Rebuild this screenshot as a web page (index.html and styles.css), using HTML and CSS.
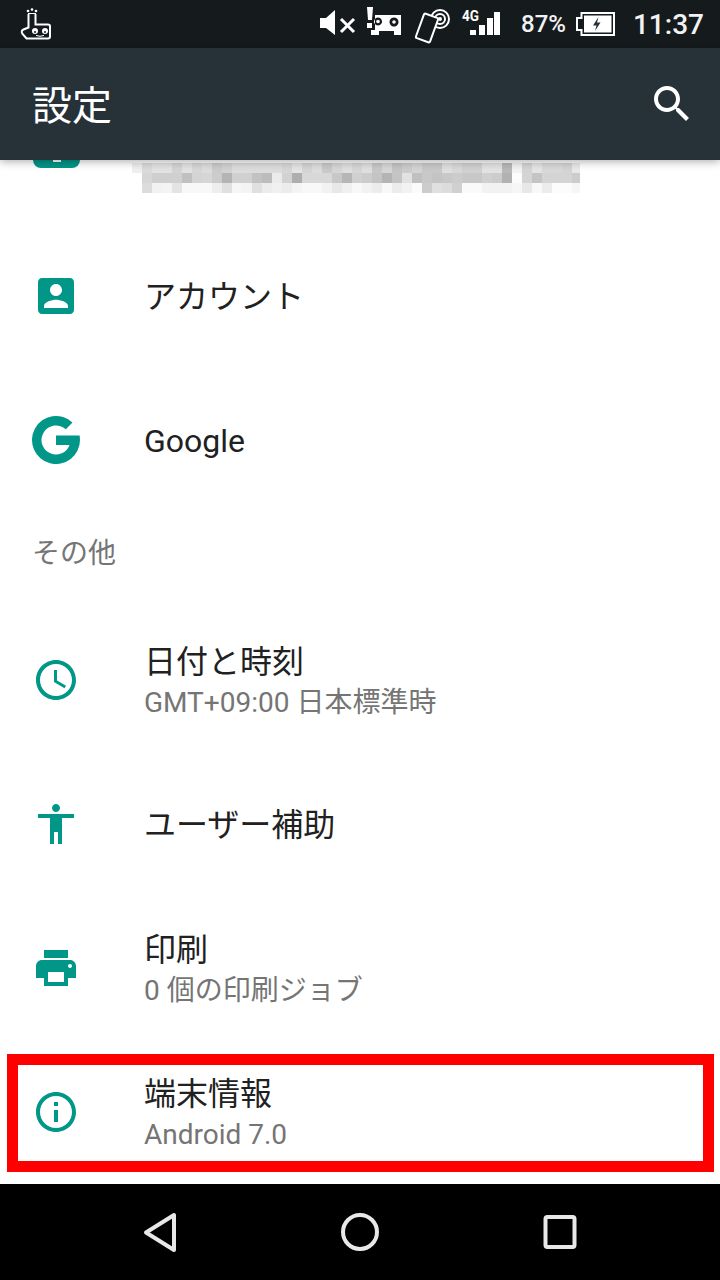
FILE: index.html
```html
<!DOCTYPE html>
<html lang="ja">
<head>
    <meta charset="UTF-8">
    <meta name="viewport" content="width=device-width, initial-scale=1.0">
    <title>設定</title>
    <link rel="stylesheet" href="styles.css">
</head>
<body>
    <div class="status-bar">
        <svg class="hand-icon" width="32" height="32" viewBox="20 8 32 32">
            <path class="line" d="M28.500 14V27.500L23.500 29.500Q20.500 31 22.500 34L26.500 38.500H48Q50 38.500 50 36.500V26Q50 24.500 48 24.500H35.500V14"/>
            <circle class="dot" cx="28" cy="11" r="1.300"/>
            <circle class="dot" cx="32" cy="9.500" r="1.300"/>
            <circle class="dot" cx="36" cy="11" r="1.300"/>
            <path class="thin" d="M28 13.500H36"/>
            <circle class="dot" cx="35" cy="31" r="3"/>
            <circle class="dot" cx="45" cy="31" r="3"/>
            <circle class="pupil" cx="35" cy="32" r="1"/>
            <circle class="pupil" cx="45" cy="32" r="1"/>
            <path class="thin" d="M36 35.500Q40 37 44 35.500"/>
        </svg>
        <div class="status-right">
            <svg class="status-icons" width="184" height="48" viewBox="318 0 184 48">
                <!-- mute -->
                <polygon class="dot" points="320,18 326,18 335,10 335,35 326,28 320,28"/>
                <path class="cross" d="M341 19L354 32M354 19L341 32"/>
                <!-- alert and glasses -->
                <polygon class="dot" points="367,7 373,7 372,20 368,20"/>
                <rect class="dot" x="367" y="23" width="5" height="5"/>
                <path class="dot" fill-rule="evenodd" d="M375 15H401V35H394V31H379V35H371V30H375ZM378 17.500a4 4 0 1 0 .01 0ZM394 17.500a4.500 4.500 0 1 0 .01 0Z"/>
                <circle class="dot" cx="378" cy="21.500" r="1.800"/>
                <circle class="dot" cx="394" cy="22" r="1.800"/>
                <!-- nfc -->
                <circle class="ring" cx="440" cy="19" r="9"/>
                <circle class="ring" cx="440" cy="19" r="5"/>
                <circle class="dot" cx="440" cy="19" r="2"/>
                <rect class="phone" x="419.500" y="15" width="15" height="26" rx="1.500" transform="rotate(20 427 28)"/>
                <!-- signal -->
                <text class="net" x="462" y="21" textLength="17" lengthAdjust="spacingAndGlyphs">4G</text>
                <rect class="dot" x="470" y="30" width="6" height="5"/>
                <rect class="dot" x="479" y="25" width="6" height="10"/>
                <rect class="dot" x="487" y="18" width="6" height="17"/>
                <rect class="dot" x="494" y="12" width="6" height="23"/>
            </svg>
            <span class="battery-text">87%</span>
            <svg class="battery" width="39" height="24" viewBox="0 0 39 24">
                <path class="line" d="M5.500 1H38V23H5.500V18H1V6H5.500Z"/>
                <rect class="dot" x="8" y="3.500" width="27.500" height="17"/>
                <polygon class="bolt" points="22.500,5 17,13.500 20.500,13.500 19,19 24.500,10.500 21,10.500"/>
            </svg>
            <span class="clock">11:37</span>
        </div>
    </div>

    <header class="app-bar">
        <h1>設定</h1>
        <svg class="icon" viewBox="0 0 24 24"><path class="white" d="M15.500 14h-.79l-.28-.27C15.410 12.590 16 11.110 16 9.500 16 5.910 13.090 3 9.500 3S3 5.910 3 9.500 5.910 16 9.500 16c1.610 0 3.090-.59 4.230-1.570l.27.28v.79l5 4.990L20.490 19l-4.990-5zm-6 0C7.010 14 5 11.990 5 9.500S7.010 5 9.500 5 14 7.010 14 9.500 11.990 14 9.500 14z"/></svg>
    </header>

    <main class="list">
        <div class="row-cut">
            <div class="cut-icon"><span></span></div>
            <svg class="mosaic" width="448" height="30" viewBox="0 0 44.800 3" shape-rendering="crispEdges">
                <g>
                    <rect x="0" fill="#efefef"/><rect x="1" fill="#dadada"/><rect x="2" fill="#e2e2e2"/><rect x="3" fill="#e2e2e2"/><rect x="4" fill="#d4d4d4"/><rect x="5" fill="#e2e2e2"/><rect x="6" fill="#d6d6d6"/><rect x="7" fill="#dcdcdc"/><rect x="8" fill="#cbcbcb"/><rect x="9" fill="#d2d2d2"/><rect x="10" fill="#dcdcdc"/><rect x="11" fill="#dcdcdc"/><rect x="12" fill="#dcdcdc"/><rect x="13" fill="#dcdcdc"/><rect x="14" fill="#dcdcdc"/><rect x="15" fill="#d6d6d6"/><rect x="16" fill="#e4e4e4"/><rect x="17" fill="#d4d4d4"/><rect x="18" fill="#dcdcdc"/><rect x="19" fill="#c9c9c9"/><rect x="20" fill="#d6d6d6"/><rect x="21" fill="#dfdfdf"/><rect x="22" fill="#d6d6d6"/>
                    <rect x="23" fill="#dfdfdf"/><rect x="24" fill="#c8c8c8"/><rect x="25" fill="#d6d6d6"/><rect x="26" fill="#c4c4c4"/><rect x="27" fill="#cccccc"/><rect x="28" fill="#d4d4d4"/><rect x="29" fill="#c8c8c8"/><rect x="30" fill="#c8c8c8"/><rect x="31" fill="#dfdfdf"/><rect x="32" fill="#d8d8d8"/><rect x="33" fill="#d0d0d0"/><rect x="34" fill="#d0d0d0"/><rect x="35" fill="#e2e2e2"/><rect x="36" fill="#e2e2e2"/><rect x="37" fill="#b8b8b8"/><rect x="38" fill="#f2f2f2"/><rect x="39" fill="#d4d4d4"/><rect x="40" fill="#e4e4e4"/><rect x="41" fill="#d8d8d8"/><rect x="42" fill="#d8d8d8"/><rect x="43" fill="#d4d4d4"/><rect x="44" fill="#e8e8e8"/>
                </g>
                <g transform="translate(0 1)">
                    <rect x="1" fill="#d6d6d6"/><rect x="2" fill="#cfcfcf"/><rect x="3" fill="#cfcfcf"/><rect x="4" fill="#d0d0d0"/><rect x="5" fill="#c0c0c0"/><rect x="6" fill="#d4d4d4"/><rect x="7" fill="#d6d6d6"/><rect x="8" fill="#cccccc"/><rect x="9" fill="#b4b4b4"/><rect x="10" fill="#d0d0d0"/><rect x="11" fill="#d0d0d0"/><rect x="12" fill="#c2c2c2"/><rect x="13" fill="#bcbcbc"/><rect x="14" fill="#ebebeb"/><rect x="15" fill="#d2d2d2"/><rect x="16" fill="#aeaeae"/><rect x="17" fill="#d8d8d8"/><rect x="18" fill="#d8d8d8"/><rect x="19" fill="#d8d8d8"/><rect x="20" fill="#c8c8c8"/><rect x="21" fill="#b6b6b6"/><rect x="22" fill="#d0d0d0"/>
                    <rect x="23" fill="#cccccc"/><rect x="24" fill="#c4c4c4"/><rect x="25" fill="#b4b4b4"/><rect x="26" fill="#c4c4c4"/><rect x="27" fill="#e2e2e2"/><rect x="28" fill="#c0c0c0"/><rect x="29" fill="#c8c8c8"/><rect x="30" fill="#c4c4c4"/><rect x="31" fill="#c8c8c8"/><rect x="32" fill="#cccccc"/><rect x="33" fill="#c8c8c8"/><rect x="34" fill="#c8c8c8"/><rect x="35" fill="#d0d0d0"/><rect x="36" fill="#cccccc"/><rect x="37" fill="#b2b2b2"/><rect x="38" fill="#fcfcfc"/><rect x="39" fill="#d4d4d4"/><rect x="40" fill="#c4c4c4"/><rect x="41" fill="#d4d4d4"/><rect x="42" fill="#d4d4d4"/><rect x="43" fill="#d4d4d4"/><rect x="44" fill="#cccccc"/>
                </g>
                <g transform="translate(0 2)">
                    <rect x="1" fill="#dcdcdc"/><rect x="2" fill="#f2f2f2"/><rect x="3" fill="#f4f4f4"/><rect x="4" fill="#e4e4e4"/><rect x="5" fill="#f8f8f8"/><rect x="6" fill="#f8f8f8"/><rect x="7" fill="#f8f8f8"/><rect x="8" fill="#eeeeee"/><rect x="9" fill="#e0e0e0"/><rect x="10" fill="#f6f6f6"/><rect x="11" fill="#f4f4f4"/><rect x="12" fill="#e0e0e0"/><rect x="13" fill="#ececec"/><rect x="14" fill="#f0f0f0"/><rect x="15" fill="#ececec"/><rect x="16" fill="#f4f4f4"/><rect x="17" fill="#f8f8f8"/><rect x="18" fill="#f8f8f8"/><rect x="19" fill="#f2f2f2"/><rect x="20" fill="#e8e8e8"/><rect x="21" fill="#f0f0f0"/><rect x="22" fill="#f8f8f8"/>
                    <rect x="23" fill="#f2f2f2"/><rect x="24" fill="#ececec"/><rect x="25" fill="#f8f8f8"/><rect x="26" fill="#ececec"/><rect x="27" fill="#f2f2f2"/><rect x="28" fill="#fbfbfb"/><rect x="29" fill="#cccccc"/><rect x="30" fill="#e0e0e0"/><rect x="31" fill="#dcdcdc"/><rect x="32" fill="#d0d0d0"/><rect x="33" fill="#fafafa"/><rect x="34" fill="#fafafa"/><rect x="35" fill="#f2f2f2"/><rect x="36" fill="#f2f2f2"/><rect x="37" fill="#f2f2f2"/><rect x="38" fill="#f6f6f6"/><rect x="39" fill="#e8e8e8"/><rect x="40" fill="#f8f8f8"/><rect x="41" fill="#ececec"/><rect x="42" fill="#fcfcfc"/><rect x="43" fill="#fcfcfc"/><rect x="44" fill="#f6f6f6"/>
                </g>
            </svg>
        </div>

        <div class="row">
            <svg class="icon" viewBox="0 0 24 24"><path d="M3 5v14c0 1.100.89 2 2 2h14c1.100 0 2-.9 2-2V5c0-1.100-.9-2-2-2H5c-1.110 0-2 .9-2 2zm12 4c0 1.660-1.340 3-3 3s-3-1.340-3-3 1.340-3 3-3 3 1.340 3 3zm-9 8c0-2 4-3.100 6-3.100s6 1.100 6 3.100v1H6v-1z"/></svg>
            <div class="row-text"><div class="title">アカウント</div></div>
        </div>
        <div class="row">
            <svg class="icon" viewBox="0 0 48 48"><path d="M24 19.500H47.600C47.800 21 48 22.500 48 24A24 24 0 1 1 40.500 6.600L33.800 13.300A14.500 14.500 0 1 0 37.600 29H24Z"/></svg>
            <div class="row-text"><div class="title">Google</div></div>
        </div>

        <div class="category">その他</div>

        <div class="row">
            <svg class="icon" viewBox="0 0 24 24"><path d="M11.990 2C6.470 2 2 6.480 2 12s4.470 10 9.990 10C17.520 22 22 17.520 22 12S17.520 2 11.990 2zM12 20c-4.420 0-8-3.580-8-8s3.580-8 8-8 8 3.580 8 8-3.580 8-8 8zm.5-13H11v6l5.250 3.150.75-1.230-4.500-2.670z"/></svg>
            <div class="row-text two-line">
                <div class="title">日付と時刻</div>
                <div class="summary">GMT+09:00 日本標準時</div>
            </div>
        </div>
        <div class="row">
            <svg class="icon" viewBox="0 0 24 24"><path d="M12 2c1.100 0 2 .9 2 2s-.9 2-2 2-2-.9-2-2 .9-2 2-2zm9 7h-6v13h-2v-6h-2v6H9V9H3V7h18v2z"/></svg>
            <div class="row-text"><div class="title">ユーザー補助</div></div>
        </div>
        <div class="row">
            <svg class="icon" viewBox="0 0 24 24"><path d="M19 8H5c-1.660 0-3 1.340-3 3v6h4v4h12v-4h4v-6c0-1.660-1.340-3-3-3zm-3 11H8v-5h8v5zm3-7c-.55 0-1-.45-1-1s.45-1 1-1 1 .45 1 1-.45 1-1 1zm-1-9H6v4h12V3z"/></svg>
            <div class="row-text two-line">
                <div class="title">印刷</div>
                <div class="summary">0 個の印刷ジョブ</div>
            </div>
        </div>
        <div class="row">
            <svg class="icon" viewBox="0 0 24 24"><path d="M11 17h2v-6h-2v6zm1-15C6.480 2 2 6.480 2 12s4.480 10 10 10 10-4.480 10-10S17.520 2 12 2zm0 18c-4.410 0-8-3.590-8-8s3.590-8 8-8 8 3.590 8 8-3.590 8-8 8zM11 9h2V7h-2v2z"/></svg>
            <div class="row-text two-line">
                <div class="title">端末情報</div>
                <div class="summary">Android 7.0</div>
            </div>
            <div class="highlight"></div>
        </div>
    </main>

    <nav class="nav-bar">
        <svg width="40" height="44" viewBox="0 0 40 44"><path class="nav-line" d="M34 5V40L6 22.500Z"/></svg>
        <svg width="40" height="44" viewBox="0 0 40 44"><circle class="nav-line" cx="20" cy="22" r="17"/></svg>
        <svg width="40" height="44" viewBox="0 0 40 44"><rect class="nav-line" x="5.500" y="7" width="29" height="30" rx="2"/></svg>
    </nav>
</body>
</html>
```

FILE: styles.css
```css
body {
    margin: 0;
    width: 720px;
    height: 1280px;
    overflow: hidden;
    display: flex;
    flex-direction: column;
    background-color: #ffffff;
    font-family: Roboto, "Noto Sans CJK JP", sans-serif;
}

/* status bar */
.status-bar {
    height: 48px;
    flex: none;
    display: flex;
    justify-content: space-between;
    align-items: center;
    padding: 0 16px 0 20px;
    background-color: #151a1d;
    color: #f2f2f2;
}
.status-right {
    display: flex;
    align-items: center;
}
.dot {
    fill: #ffffff;
}
.pupil {
    fill: #151a1d;
}
.line {
    fill: none;
    stroke: #ffffff;
    stroke-width: 2;
}
.thin {
    fill: none;
    stroke: #ffffff;
    stroke-width: 1;
}
.cross {
    fill: none;
    stroke: #ffffff;
    stroke-width: 3;
}
.ring {
    fill: none;
    stroke: #ffffff;
    stroke-width: 2;
}
.phone {
    fill: #151a1d;
    stroke: #ffffff;
    stroke-width: 2;
}
.bolt {
    fill: #263238;
}
.net {
    fill: #ffffff;
    font-size: 14px;
    font-weight: 700;
}
.battery-text {
    margin-left: 19px;
    font-size: 24px;
    font-weight: 500;
}
.battery {
    margin-left: 10px;
}
.clock {
    margin-left: 18px;
    font-size: 28px;
    font-weight: 500;
}

/* app bar */
.app-bar {
    height: 112px;
    flex: none;
    display: flex;
    justify-content: space-between;
    align-items: center;
    padding: 0 24px 0 32px;
    background-color: #263238;
    box-shadow: 0 2px 8px rgba(0, 0, 0, 0.3);
    position: relative;
}
.app-bar h1 {
    margin: 0 0 3px;
    color: #ffffff;
    font-size: 40px;
    font-weight: 400;
}
.icon {
    width: 48px;
    height: 48px;
    flex: none;
    fill: #009688;
}
.white {
    fill: #ffffff;
}

/* list */
.list {
    flex: 1;
}
.row-cut {
    height: 64px;
    display: flex;
    align-items: flex-start;
}
.cut-icon {
    width: 47px;
    height: 8px;
    margin-left: 33px;
    display: flex;
    justify-content: center;
    background-color: #009688;
    border-radius: 0 0 8px 8px;
}
.cut-icon span {
    width: 8px;
    height: 2px;
    background-color: #ffffff;
}
.mosaic {
    margin: 3px 0 0 52px;
}
.mosaic rect {
    width: 1px;
    height: 1px;
}
.row {
    height: 144px;
    display: flex;
    align-items: center;
    position: relative;
}
.row > .icon {
    margin-left: 32px;
}
.row-text {
    margin-left: 64px;
    padding-top: 2px;
}
.two-line {
    padding-top: 4px;
}
.title {
    font-size: 32px;
    line-height: 42px;
    color: #212121;
}
.summary {
    font-size: 28px;
    line-height: 40px;
    color: #757575;
}
.category {
    height: 96px;
    box-sizing: border-box;
    padding: 22px 32px 0;
    font-size: 28px;
    line-height: 40px;
    color: #757575;
}

/* red annotation round the last row */
.highlight {
    position: absolute;
    left: 7px;
    right: 6px;
    top: 14px;
    height: 118px;
    box-sizing: border-box;
    border: 11px solid #ff0000;
}

/* nav bar */
.nav-bar {
    height: 96px;
    flex: none;
    display: flex;
    justify-content: space-between;
    align-items: center;
    padding: 0 140px;
    background-color: #000000;
}
.nav-line {
    fill: none;
    stroke: #e8e8e8;
    stroke-width: 4;
    stroke-linejoin: round;
}
```
